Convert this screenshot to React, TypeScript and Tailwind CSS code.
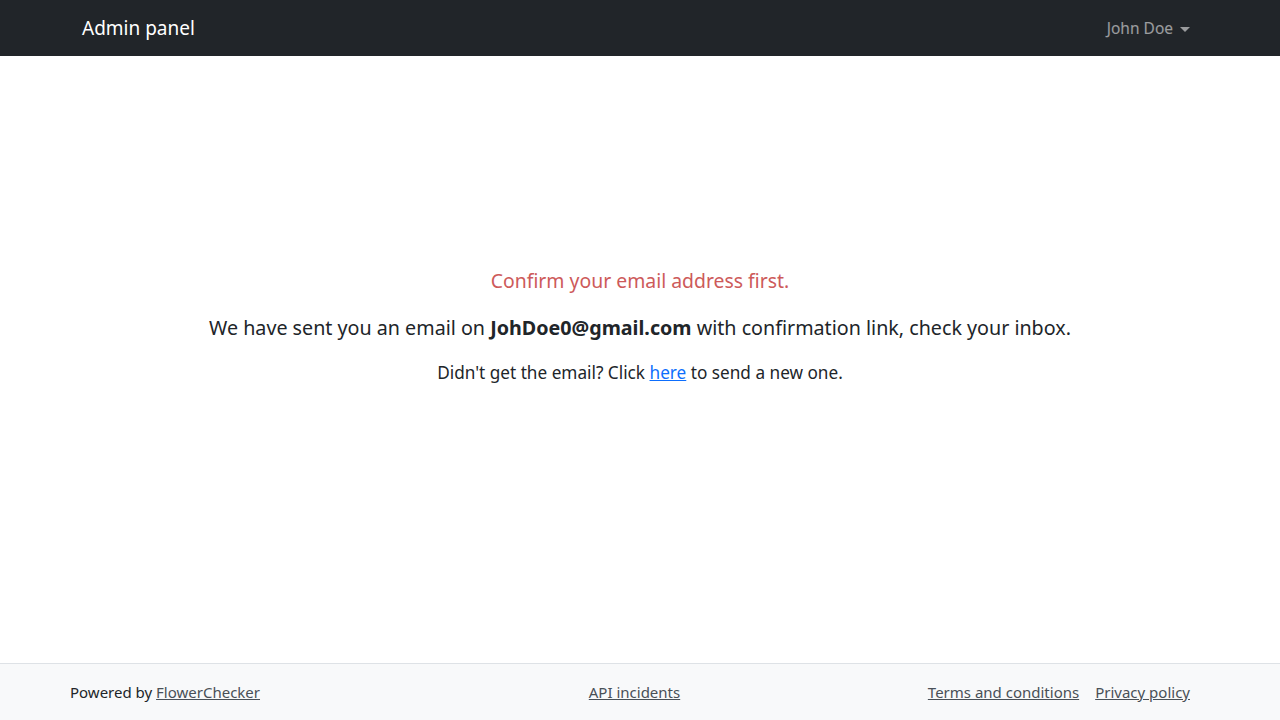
import React from "react";

const font = { fontFamily: '"Noto Sans", "Open Sans", sans-serif' };

export default function App() {
  return (
    <div className="min-h-screen flex flex-col bg-white text-[#212529]" style={font}>
      <nav className="h-14 bg-[#212529] flex items-center">
        <div className="w-[1140px] mx-auto pl-3 pr-[20px] flex items-center justify-between">
          <span className="text-white text-[19px] leading-none">Admin panel</span>
          <button className="flex items-center gap-[7px] text-[15.5px] text-white/55 mt-[2px]">
            John Doe
            <span className="w-0 h-0 border-x-[5px] border-x-transparent border-t-[5px] border-t-[#9a9b9d]" />
          </button>
        </div>
      </nav>

      <main className="flex-1 flex flex-col items-center pt-[210px] text-center">
        <p className="text-[#cd5a5a] text-[19.4px]">Confirm your email address first.</p>
        <p className="text-[19.7px] mt-[18px]">
          We have sent you an email on <b className="font-bold">JohDoe0@gmail.com</b> with confirmation link, check your inbox.
        </p>
        <p className="text-[17.2px] mt-[17px]">
          Didn't get the email? Click{" "}
          <a href="#" className="text-[#0d6efd] underline">here</a> to send a new one.
        </p>
      </main>

      <footer className="h-[57px] bg-[#f8f9fa] border-t border-[#dee2e6] flex items-center">
        <div className="w-[1140px] mx-auto pr-[20px] grid grid-cols-3 items-center text-[15px]">
          <span>
            Powered by <a href="#" className="text-[#495057] underline">FlowerChecker</a>
          </span>
          <a href="#" className="justify-self-center text-[#495057] underline ml-[9px]">API incidents</a>
          <div className="justify-self-end flex gap-4">
            <a href="#" className="text-[#495057] underline">Terms and conditions</a>
            <a href="#" className="text-[#495057] underline">Privacy policy</a>
          </div>
        </div>
      </footer>
    </div>
  );
}
